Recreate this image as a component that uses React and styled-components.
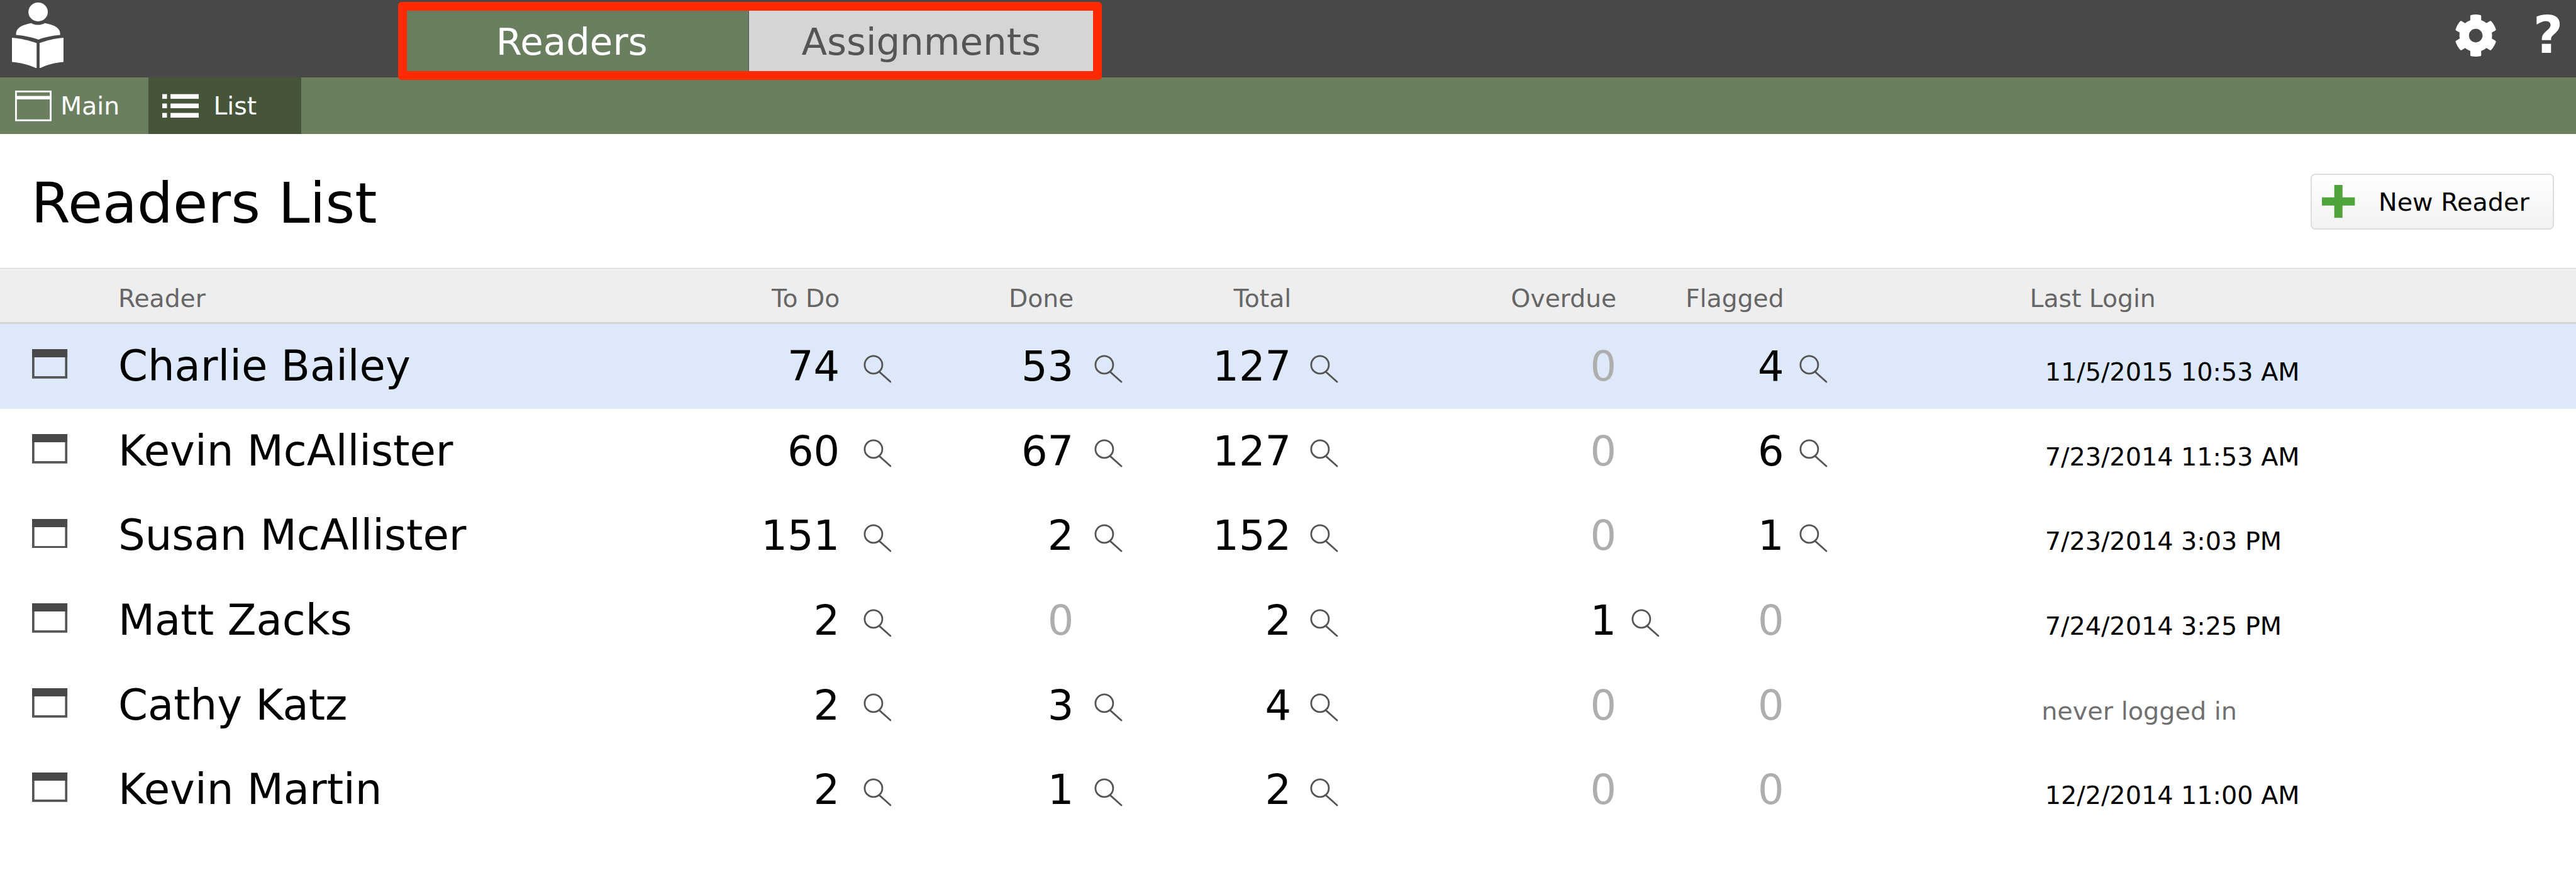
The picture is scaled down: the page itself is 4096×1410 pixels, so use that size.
import React from 'react';
import styled, { createGlobalStyle } from 'styled-components';
import { FaCog } from 'react-icons/fa';

// all sizes are taken from the 4380px reference and scaled down to the window
const u = (n) => `${n * 0.935}px`;

const GlobalStyle = createGlobalStyle`
    html, body { margin: 0; padding: 0; background: #fff; }
    body { font-family: "DejaVu Sans", Verdana, sans-serif; overflow: hidden; }
    * { box-sizing: border-box; }
`;

const TopBar = styled.header`
    height: ${u(132)};
    background: #484848;
    display: flex;
    align-items: flex-start;
    padding-left: ${u(20)};
`;

const Logo = styled.svg`
    width: ${u(88)};
    height: ${u(112)};
    margin-top: ${u(4)};
    flex: none;
`;

const Highlight = styled.nav`
    position: relative;
    z-index: 2;
    margin: ${u(3)} 0 0 ${u(569)};
    width: ${u(1197)};
    height: ${u(133)};
    border: ${u(15)} solid #ff2a00;
    border-radius: ${u(6)};
    display: flex;
`;

const SectionTab = styled.div`
    flex: ${(p) => (p.$active ? `0 0 ${u(581)}` : 1)};
    background: ${(p) => (p.$active ? '#6a7f5f' : '#d5d5d5')};
    color: ${(p) => (p.$active ? '#fff' : '#555')};
    border-left: ${(p) => (p.$active ? 'none' : `${u(2)} solid #555`)};
    padding: ${u(3)} ${(p) => (p.$active ? u(20) : 0)} 0 0;
    font-size: ${u(63.5)};
    display: flex;
    align-items: center;
    justify-content: center;
`;

const TopIcons = styled.div`
    margin-left: auto;
    display: flex;
    align-items: flex-start;
    color: #fff;
    padding-right: ${u(22)};
`;

const Gear = styled(FaCog)`
    width: ${u(74)};
    height: ${u(74)};
    margin-top: ${u(23)};
`;

const HelpMark = styled.span`
    margin-left: ${u(60)};
    font-weight: 700;
    font-size: ${u(88)};
    line-height: ${u(120)};
`;

const SubNav = styled.div`
    height: ${u(96)};
    background: #6a7f5f;
    display: flex;
`;

const SubTab = styled.div`
    width: ${(p) => (p.$active ? u(260) : u(252))};
    background: ${(p) => (p.$active ? '#465539' : 'transparent')};
    padding-left: ${(p) => (p.$active ? u(24) : u(26))};
    color: #fff;
    font-size: ${u(42)};
    display: flex;
    align-items: center;
    gap: ${(p) => (p.$active ? u(25) : u(15))};
`;

const SubIcon = styled.svg`
    width: ${u(62)};
    height: ${u(52)};
    flex: none;
`;

const TitleBar = styled.div`
    height: ${u(228)};
    display: flex;
    align-items: center;
    justify-content: space-between;
    padding: ${u(2)} ${u(37)} 0 ${u(53)};
`;

const Title = styled.h1`
    margin: ${u(5)} 0 0;
    font-size: ${u(96)};
    font-weight: 400;
    color: #000;
`;

const NewButton = styled.button`
    width: ${u(414)};
    height: ${u(95)};
    border: ${u(3)} solid #ddd;
    border-radius: ${u(8)};
    background: linear-gradient(#fff, #f2f2f2);
    font: inherit;
    font-size: ${u(42.5)};
    color: #000;
    display: flex;
    align-items: center;
    padding: 0 0 0 ${u(17)};
    gap: ${u(40)};
`;

const PlusIcon = styled.svg`
    width: ${u(56)};
    height: ${u(56)};
    flex: none;
`;

const columns = [201, 899, 328, 102, 296, 94, 276, 94, 459, 91, 194, 418, 928]
    .map((w) => u(w))
    .join(' ');

const HeadRow = styled.div`
    display: grid;
    grid-template-columns: ${columns};
    height: ${u(95)};
    padding-top: ${u(27)};
    background: #eee;
    border-top: ${u(2)} solid #d5d5d5;
    border-bottom: ${u(4)} solid #d5d5d5;
    align-items: baseline;
    font-size: ${u(42)};
    line-height: ${u(48)};
    color: #666;
`;

const HeadNum = styled.span`
    text-align: right;
    white-space: nowrap;
`;

const Row = styled.div`
    display: grid;
    grid-template-columns: ${columns};
    height: ${u(144)};
    padding-top: ${u(32)};
    background: ${(p) => (p.$selected ? '#dde9f8' : '#fff')};
    align-items: baseline;
    font-size: ${u(70)};
    line-height: ${u(80)};
    color: #000;
`;

const RowIcon = styled.svg`
    width: ${u(60)};
    height: ${u(50)};
    margin: ${u(11)} 0 0 ${u(55)};
    align-self: start;
`;

const Name = styled.span`
    font-size: ${u(72)};
    white-space: nowrap;
`;

const Num = styled.span`
    text-align: right;
    color: ${(p) => (p.$zero ? '#aeaeae' : '#000')};
`;

const MagCell = styled.div`
    align-self: start;
    padding: ${u(20)} 0 0 ${(p) => u(p.$offset)};
    line-height: 0;
`;

const MagIcon = styled.svg`
    width: ${u(48)};
    height: ${u(48)};
`;

const LastLogin = styled.span`
    font-size: ${u(42.5)};
    padding-left: ${(p) => (p.$never ? u(20) : u(26))};
    color: ${(p) => (p.$never ? '#707070' : '#000')};
    white-space: nowrap;
`;

const Magnifier = () => (
    <MagIcon viewBox="0 0 48 48" fill="none" stroke="#555" strokeWidth="3">
        <circle cx="17" cy="17" r="15" />
        <path d="M27 29 L46 46" strokeLinecap="round" />
    </MagIcon>
);

const offsets = [40, 35, 32, 25, 26];

const readers = [
    { name: 'Charlie Bailey', stats: [74, 53, 127, 0, 4], login: '11/5/2015 10:53 AM' },
    { name: 'Kevin McAllister', stats: [60, 67, 127, 0, 6], login: '7/23/2014 11:53 AM' },
    { name: 'Susan McAllister', stats: [151, 2, 152, 0, 1], login: '7/23/2014 3:03 PM' },
    { name: 'Matt Zacks', stats: [2, 0, 2, 1, 0], login: '7/24/2014 3:25 PM' },
    { name: 'Cathy Katz', stats: [2, 3, 4, 0, 0], login: 'never logged in' },
    { name: 'Kevin Martin', stats: [2, 1, 2, 0, 0], login: '12/2/2014 11:00 AM' },
];

const App = () => (
    <>
        <GlobalStyle />
        <TopBar>
            <Logo viewBox="0 0 88 112" fill="#fff">
                <ellipse cx="44.5" cy="16" rx="16.5" ry="16" />
                <path d="M7 53 C7 44 16 38 33 35 C38 39 50 39 56 35 C73 38 82 44 82 53 L82 55 C70 56 55 59 45 63 C34 59 20 56 7 55 Z" />
                <path d="M0 60 C15 61 30 65 42 69 L42 112 C30 106 14 102 0 101 Z" />
                <path d="M88 60 C73 61 58 65 47 69 L47 112 C58 106 74 102 88 101 Z" />
            </Logo>
            <Highlight>
                <SectionTab $active>Readers</SectionTab>
                <SectionTab>Assignments</SectionTab>
            </Highlight>
            <TopIcons>
                <Gear />
                <HelpMark>?</HelpMark>
            </TopIcons>
        </TopBar>
        <SubNav>
            <SubTab>
                <SubIcon viewBox="0 0 62 52" fill="none" stroke="#fff">
                    <rect x="1.5" y="1.5" width="59" height="49" strokeWidth="3" />
                    <path d="M0 12 H62" strokeWidth="6" />
                </SubIcon>
                Main
            </SubTab>
            <SubTab $active>
                <SubIcon viewBox="0 0 62 52" fill="#fff">
                    <rect x="0" y="6" width="8" height="8" />
                    <rect x="0" y="22" width="8" height="8" />
                    <rect x="0" y="38" width="8" height="8" />
                    <rect x="14" y="6" width="48" height="8" />
                    <rect x="14" y="22" width="48" height="8" />
                    <rect x="14" y="38" width="48" height="8" />
                </SubIcon>
                List
            </SubTab>
        </SubNav>
        <TitleBar>
            <Title>Readers List</Title>
            <NewButton>
                <PlusIcon viewBox="0 0 56 56" fill="#4fa53c">
                    <path d="M21 0 H35 V21 H56 V35 H35 V56 H21 V35 H0 V21 H21 Z" />
                </PlusIcon>
                New Reader
            </NewButton>
        </TitleBar>
        <HeadRow>
            <span />
            <span>Reader</span>
            <HeadNum>To Do</HeadNum>
            <span />
            <HeadNum>Done</HeadNum>
            <span />
            <HeadNum>Total</HeadNum>
            <span />
            <HeadNum>Overdue</HeadNum>
            <span />
            <HeadNum>Flagged</HeadNum>
            <span />
            <span>Last Login</span>
        </HeadRow>
        {readers.map((r, i) => (
            <Row key={r.name} $selected={i === 0}>
                <RowIcon viewBox="0 0 60 50" fill="none" stroke="#555">
                    <rect x="2" y="2" width="56" height="46" strokeWidth="4" />
                    <path d="M0 7 H60" strokeWidth="14" stroke="#484848" />
                </RowIcon>
                <Name>{r.name}</Name>
                {r.stats.map((n, c) => (
                    <React.Fragment key={c}>
                        <Num $zero={n === 0}>{n}</Num>
                        <MagCell $offset={offsets[c]}>{n > 0 && <Magnifier />}</MagCell>
                    </React.Fragment>
                ))}
                <LastLogin $never={r.login.startsWith('never')}>{r.login}</LastLogin>
            </Row>
        ))}
    </>
);

export default App;
